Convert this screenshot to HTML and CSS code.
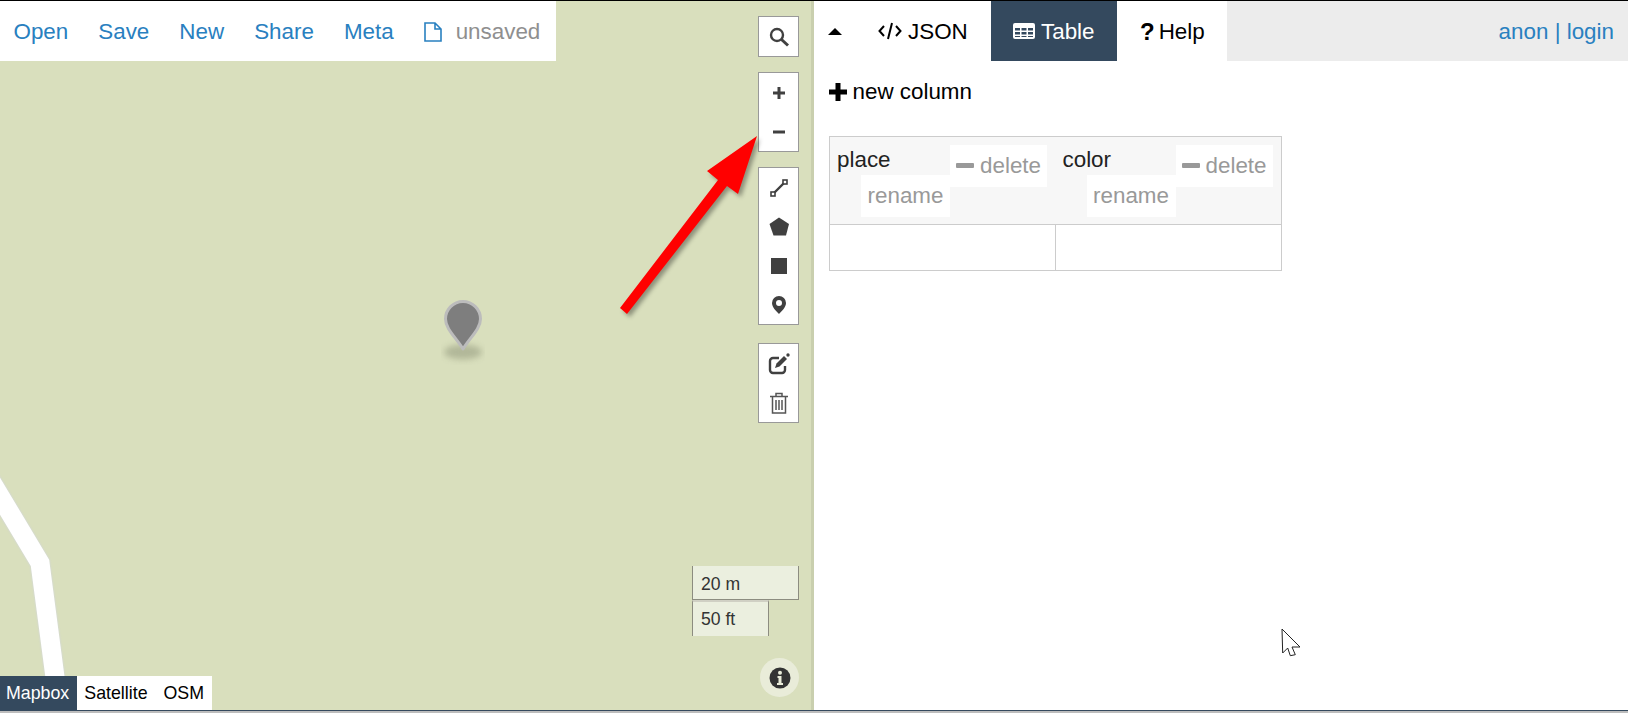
FILE: index.html
```html
<!DOCTYPE html>
<html lang="en">
<head>
  <meta charset="UTF-8" />
  <meta name="viewport" content="width=device-width, initial-scale=1" />
  <title>geojson.io</title>
  <link rel="stylesheet" href="styles.css">
</head>
<body>
  <main class="app">
    <section class="map" aria-label="Map">
      <svg class="road" viewBox="0 0 80 240" aria-hidden="true">
        <polyline points="-12,16 40,103 58,240" />
      </svg>

      <nav class="file-bar">
        <a href="#">Open</a>
        <a href="#">Save</a>
        <a href="#">New</a>
        <a href="#">Share</a>
        <a href="#">Meta</a>
        <span class="file-name">
          <svg class="file-icon" viewBox="0 0 18 20" aria-hidden="true">
            <path d="M1 1h10l6 6v12H1zM11 1v6h6" />
          </svg>
          <span>unsaved</span>
        </span>
      </nav>

      <div class="controls">
        <div class="ctrl-group">
          <button class="ctrl" type="button" aria-label="Search">
            <svg viewBox="0 0 24 24"><circle cx="10" cy="10" r="6" class="search" /><path d="M14.5 14.5l6.5 6" class="line" /></svg>
          </button>
        </div>
        <div class="ctrl-group">
          <button class="ctrl" type="button" aria-label="Zoom in">
            <svg viewBox="0 0 24 24"><path d="M12 6v12M6 12h12" class="line" /></svg>
          </button>
          <button class="ctrl" type="button" aria-label="Zoom out">
            <svg viewBox="0 0 24 24"><path d="M6 12h12" class="line" /></svg>
          </button>
        </div>
        <div class="ctrl-group">
          <button class="ctrl" type="button" aria-label="Draw line">
            <svg viewBox="0 0 24 24"><path d="M6 18L18 6" class="thick" /><rect x="4" y="16" width="4" height="4" class="handle" /><rect x="16" y="4" width="4" height="4" class="handle" /></svg>
          </button>
          <button class="ctrl" type="button" aria-label="Draw polygon">
            <svg viewBox="0 0 24 24"><path d="M12 2.500l10 6.500-3 11.500H6.500L2.500 9z" class="solid" /></svg>
          </button>
          <button class="ctrl" type="button" aria-label="Draw rectangle">
            <svg viewBox="0 0 24 24"><rect x="4" y="4" width="16" height="16" class="solid" /></svg>
          </button>
          <button class="ctrl" type="button" aria-label="Draw marker">
            <svg viewBox="0 0 24 24"><path fill-rule="evenodd" d="M12 3a7 7 0 0 1 7 7c0 4-4 8-7 11-3-3-7-7-7-11a7 7 0 0 1 7-7zm0 4a3 3 0 1 0 0 6 3 3 0 0 0 0-6z" class="solid" /></svg>
          </button>
        </div>
        <div class="ctrl-group ctrl-group-edit">
          <button class="ctrl" type="button" aria-label="Edit layers">
            <svg viewBox="0 0 24 24"><path d="M18 14v4a3 3 0 0 1-3 3H6a3 3 0 0 1-3-3V9a3 3 0 0 1 3-3h6" class="thick" /><path d="M8 16l1.500-4.500 7.500-7.500 3 3-7.500 7.500z" class="solid" /><circle cx="21" cy="3" r="1.700" class="solid" /></svg>
          </button>
          <button class="ctrl" type="button" aria-label="Delete layers">
            <svg viewBox="0 0 24 24"><path d="M3 5.500h18M9 5V2.500h6V5M5.500 6v16h13V6M9 9v10M12 9v10M15 9v10" class="trash" /></svg>
          </button>
        </div>
      </div>

      <svg class="arrow" viewBox="0 0 160 200" aria-hidden="true">
        <path d="M157 6L138 64 127 56 27 184 20 178 118 50 107 41z" />
      </svg>

      <svg class="pin" viewBox="0 0 44 68" aria-hidden="true">
        <ellipse cx="22" cy="55" rx="19" ry="7.500" class="pin-shadow" />
        <path d="M22 4.500a17.500 17.500 0 0 1 17.500 17.500c0 10-11 19-17.500 30C15.500 41 4.500 32 4.500 22A17.500 17.500 0 0 1 22 4.500z" class="pin-body" />
      </svg>

      <div class="scale">
        <div class="scale-metric">20 m</div>
        <div class="scale-imperial">50 ft</div>
      </div>

      <div class="attrib">
        <svg viewBox="0 0 22 22" aria-hidden="true">
          <circle cx="11" cy="11" r="10.500" class="attrib-disc" />
          <circle cx="11" cy="5.800" r="2" class="attrib-dot" />
          <path d="M8.500 9h4v7h1.500v2H8v-2h1.500v-5h-1z" class="attrib-dot" />
        </svg>
      </div>

      <div class="layer-switch">
        <a href="#" class="layer active">Mapbox</a>
        <a href="#" class="layer">Satellite</a>
        <a href="#" class="layer">OSM</a>
      </div>
    </section>

    <section class="pane">
      <header class="tabs">
        <button class="collapse" type="button" aria-label="Collapse"></button>
        <a href="#" class="tab tab-json">
          <svg class="code-icon" viewBox="0 0 24 18" aria-hidden="true"><path d="M6 4L1.500 9 6 14M18 4l4.500 5L18 14M14 1l-4 16" /></svg>
          JSON
        </a>
        <a href="#" class="tab tab-table active">
          <svg class="table-icon" viewBox="0 0 22 16" aria-hidden="true"><path fill-rule="evenodd" d="M2 0h18a2 2 0 0 1 2 2v12a2 2 0 0 1-2 2H2a2 2 0 0 1-2-2V2a2 2 0 0 1 2-2zm0 5v2.500h5V5zm6.500 0v2.500h5V5zM15 5v2.500h5V5zM2 9v2.500h5V9zm6.500 0v2.500h5V9zM15 9v2.500h5V9zM2 13v1h5v-1zm6.500 0v1h5v-1zm6.500 0v1h5v-1z" /></svg>
          Table
        </a>
        <a href="#" class="tab tab-help"><b>?</b><span>Help</span></a>
        <div class="user">
          <a href="#">anon</a> | <a href="#">login</a>
        </div>
      </header>

      <div class="content">
        <a href="#" class="new-column">
          <svg viewBox="0 0 18 18" aria-hidden="true"><path d="M6.500 0h5v6.500H18v5h-6.500V18h-5v-6.500H0v-5h6.500z" /></svg>
          new column
        </a>

        <table class="data-table">
          <thead>
            <tr>
              <th>
                <div class="col-head">
                  <span class="col-name">place</span>
                  <button class="col-btn col-delete" type="button"><i class="minus"></i>delete</button>
                  <button class="col-btn col-rename" type="button">rename</button>
                </div>
              </th>
              <th>
                <div class="col-head">
                  <span class="col-name">color</span>
                  <button class="col-btn col-delete" type="button"><i class="minus"></i>delete</button>
                  <button class="col-btn col-rename" type="button">rename</button>
                </div>
              </th>
            </tr>
          </thead>
          <tbody>
            <tr><td></td><td></td></tr>
          </tbody>
        </table>
      </div>

      <svg class="cursor" viewBox="0 0 20 30" aria-hidden="true">
        <path d="M1 1L1.700 25 6.700 20 9.300 27.700 14.300 26.700 11 19H19z" />
      </svg>
    </section>
  </main>
</body>
</html>
```

FILE: styles.css
```css
:root {
  --color-map: #d9dfbd;
  --color-divider: #c9cfae;
  --color-dark: #34495e;
  --color-link: #2980c0;
  --color-muted: #999999;
  --color-border: #cccccc;
  --color-icon: #404040;
}

* {
  box-sizing: border-box;
}

html, body {
  height: 100%;
}

body {
  margin: 0;
  overflow: hidden;
  background: #bdbdbd;
  color: #000;
  font-family: "Liberation Sans", Arial, sans-serif;
  font-size: 22.4px;
  padding-bottom: 2px;
}

a {
  color: inherit;
  text-decoration: none;
}

button {
  font: inherit;
  border: none;
  padding: 0;
  cursor: pointer;
}

.app {
  display: flex;
  height: 100%;
  border-top: 1px solid #000;
  border-bottom: 1px solid var(--color-dark);
}

/* map side */
.map {
  position: relative;
  width: 814px;
  flex: none;
  overflow: hidden;
  background: var(--color-map);
  border-right: 3px solid var(--color-divider);
}

.road {
  position: absolute;
  left: 0;
  top: 459px;
  width: 80px;
  height: 240px;
  fill: none;
}

.road polyline {
  stroke: #fff;
  stroke-width: 19;
  filter: drop-shadow(0 0 1px #d3d6e4);
}

.file-bar {
  position: absolute;
  left: 0;
  top: 0;
  width: 556px;
  height: 60px;
  display: flex;
  align-items: center;
  gap: 30px;
  padding: 1px 0 0 13.5px;
  background: #fff;
  color: var(--color-link);
  line-height: 59px;
}

.file-name {
  display: flex;
  align-items: center;
  gap: 14px;
  color: #8f8f8f;
}

.file-icon {
  width: 18px;
  height: 20px;
  fill: none;
  stroke: var(--color-link);
  stroke-width: 1.6;
}

.controls {
  position: absolute;
  top: 15px;
  left: 758px;
  display: flex;
  flex-direction: column;
  gap: 15px;
}

.ctrl-group {
  width: 41px;
  display: flex;
  flex-direction: column;
  background: #fff;
  border: 1px solid var(--color-muted);
}

.ctrl-group-edit {
  margin-top: 3px;
}

.ctrl {
  display: flex;
  align-items: center;
  justify-content: center;
  height: 39px;
  background: none;
}

.ctrl svg {
  width: 24px;
  height: 24px;
  fill: none;
}

.line {
  stroke: var(--color-icon);
  stroke-width: 3;
}

.search {
  stroke: var(--color-icon);
  stroke-width: 2.4;
}

.trash {
  stroke: #555;
  stroke-width: 1.5;
}

.thick {
  stroke: var(--color-icon);
  stroke-width: 2.4;
}

.handle {
  fill: #fff;
  stroke: var(--color-icon);
  stroke-width: 1.6;
}

.solid {
  fill: var(--color-icon);
}

.arrow {
  position: absolute;
  left: 600px;
  top: 129px;
  width: 160px;
  height: 200px;
  filter: drop-shadow(3px 3px 2px rgba(0, 0, 0, 0.35));
}

.arrow path {
  fill: #ff0000;
}

.pin {
  position: absolute;
  left: 441px;
  top: 296px;
  width: 44px;
  height: 68px;
}

.pin-shadow {
  fill: #a8ae90;
  opacity: 0.8;
  filter: blur(3px);
}

.pin-body {
  fill: #7e7e7e;
  stroke: #bcbcbc;
  stroke-width: 3;
  stroke-linejoin: round;
}

.scale {
  position: absolute;
  left: 692px;
  top: 565px;
  font-size: 17.600px;
  color: #333;
}

.scale-metric,
.scale-imperial {
  background: #ebefdf;
  padding-left: 8px;
  border: 1px solid #8c8c80;
  border-top: none;
}

.scale-metric {
  width: 107px;
  height: 34px;
  line-height: 36px;
}

.scale-imperial {
  width: 77px;
  height: 36px;
  border-bottom: none;
  border-top: 2px solid #d0d0c4;
  line-height: 34px;
}

.attrib {
  position: absolute;
  left: 760px;
  top: 657px;
  width: 39px;
  height: 39px;
  display: flex;
  align-items: center;
  justify-content: center;
  border-radius: 50%;
  background: #e9ecd9;
}

.attrib svg {
  width: 22px;
  height: 22px;
}

.attrib-disc {
  fill: #333;
}

.attrib-dot {
  fill: #e9ecd9;
}

.layer-switch {
  position: absolute;
  left: 0;
  bottom: 0;
  height: 34px;
  display: flex;
  background: #fff;
  font-size: 17.800px;
  line-height: 34px;
}

.layer {
  padding: 0 8px;
}

.layer.active {
  background: var(--color-dark);
  color: #fff;
  padding: 0 8px 0 6px;
}

.layer.active + .layer {
  padding-left: 7px;
}

/* table side */
.pane {
  position: relative;
  flex: 1;
  background: #fff;
}

.tabs {
  display: flex;
  height: 60px;
  align-items: stretch;
  background: #ececec;
  line-height: 61px;
}

.collapse {
  width: 50px;
  background: #fff;
  position: relative;
}

.collapse::after {
  content: "";
  position: absolute;
  left: 14px;
  top: 27px;
  border: 7px solid transparent;
  border-top: none;
  border-bottom-color: #000;
}

.tab {
  display: flex;
  align-items: center;
  background: #fff;
}

.tab-json {
  width: 127px;
  gap: 6px;
  padding-left: 14px;
}

.code-icon {
  width: 24px;
  height: 18px;
  fill: none;
  stroke: #000;
  stroke-width: 2;
}

.tab-table {
  width: 126px;
  gap: 6px;
  padding-left: 22px;
}

.tab-table.active {
  background: var(--color-dark);
  color: #fff;
}

.table-icon {
  width: 22px;
  height: 16px;
  fill: #fff;
}

.tab-help {
  width: 110px;
  gap: 4px;
  padding-left: 23px;
}

.tab-help b {
  font-size: 24px;
}

.user {
  margin-left: auto;
  padding-right: 14px;
  color: var(--color-link);
}

.content {
  padding: 19px 0 0 15px;
}

.new-column {
  display: flex;
  align-items: center;
  gap: 5.5px;
  height: 24px;
}

.new-column svg {
  width: 18px;
  height: 18px;
}

.data-table {
  width: 453px;
  margin-top: 32px;
  table-layout: fixed;
  border-collapse: collapse;
}

.data-table th,
.data-table td {
  padding: 0;
  border: 1px solid var(--color-border);
}

.data-table th {
  background: #f7f7f7;
  font-weight: 400;
  text-align: left;
  padding: 8px 0 7px 7px;
}

.data-table th + th {
  border-left: none;
}

.data-table th:first-child {
  border-right: none;
}

.data-table td {
  height: 46px;
}

.col-head {
  display: grid;
  grid-template-columns: 113px 97px;
  grid-template-rows: 30px 12px 30px;
  color: #222;
}

.col-name {
  grid-column: 1;
  grid-row: 1;
  line-height: 30px;
}

.col-btn {
  background: #fff;
  color: var(--color-muted);
  height: 42px;
  padding-bottom: 1px;
}

.col-delete {
  grid-column: 2;
  grid-row: 1 / span 2;
  display: flex;
  align-items: center;
  gap: 6px;
  padding-left: 6px;
}

.col-rename {
  grid-column: 1;
  grid-row: 2 / span 2;
  justify-self: end;
  width: 89px;
}

.minus {
  width: 18px;
  height: 5px;
  border-radius: 1px;
  background: var(--color-muted);
}

.cursor {
  position: absolute;
  left: 467px;
  top: 627px;
  width: 20px;
  height: 30px;
  fill: #fff;
  stroke: #222;
  stroke-width: 1;
}
```
